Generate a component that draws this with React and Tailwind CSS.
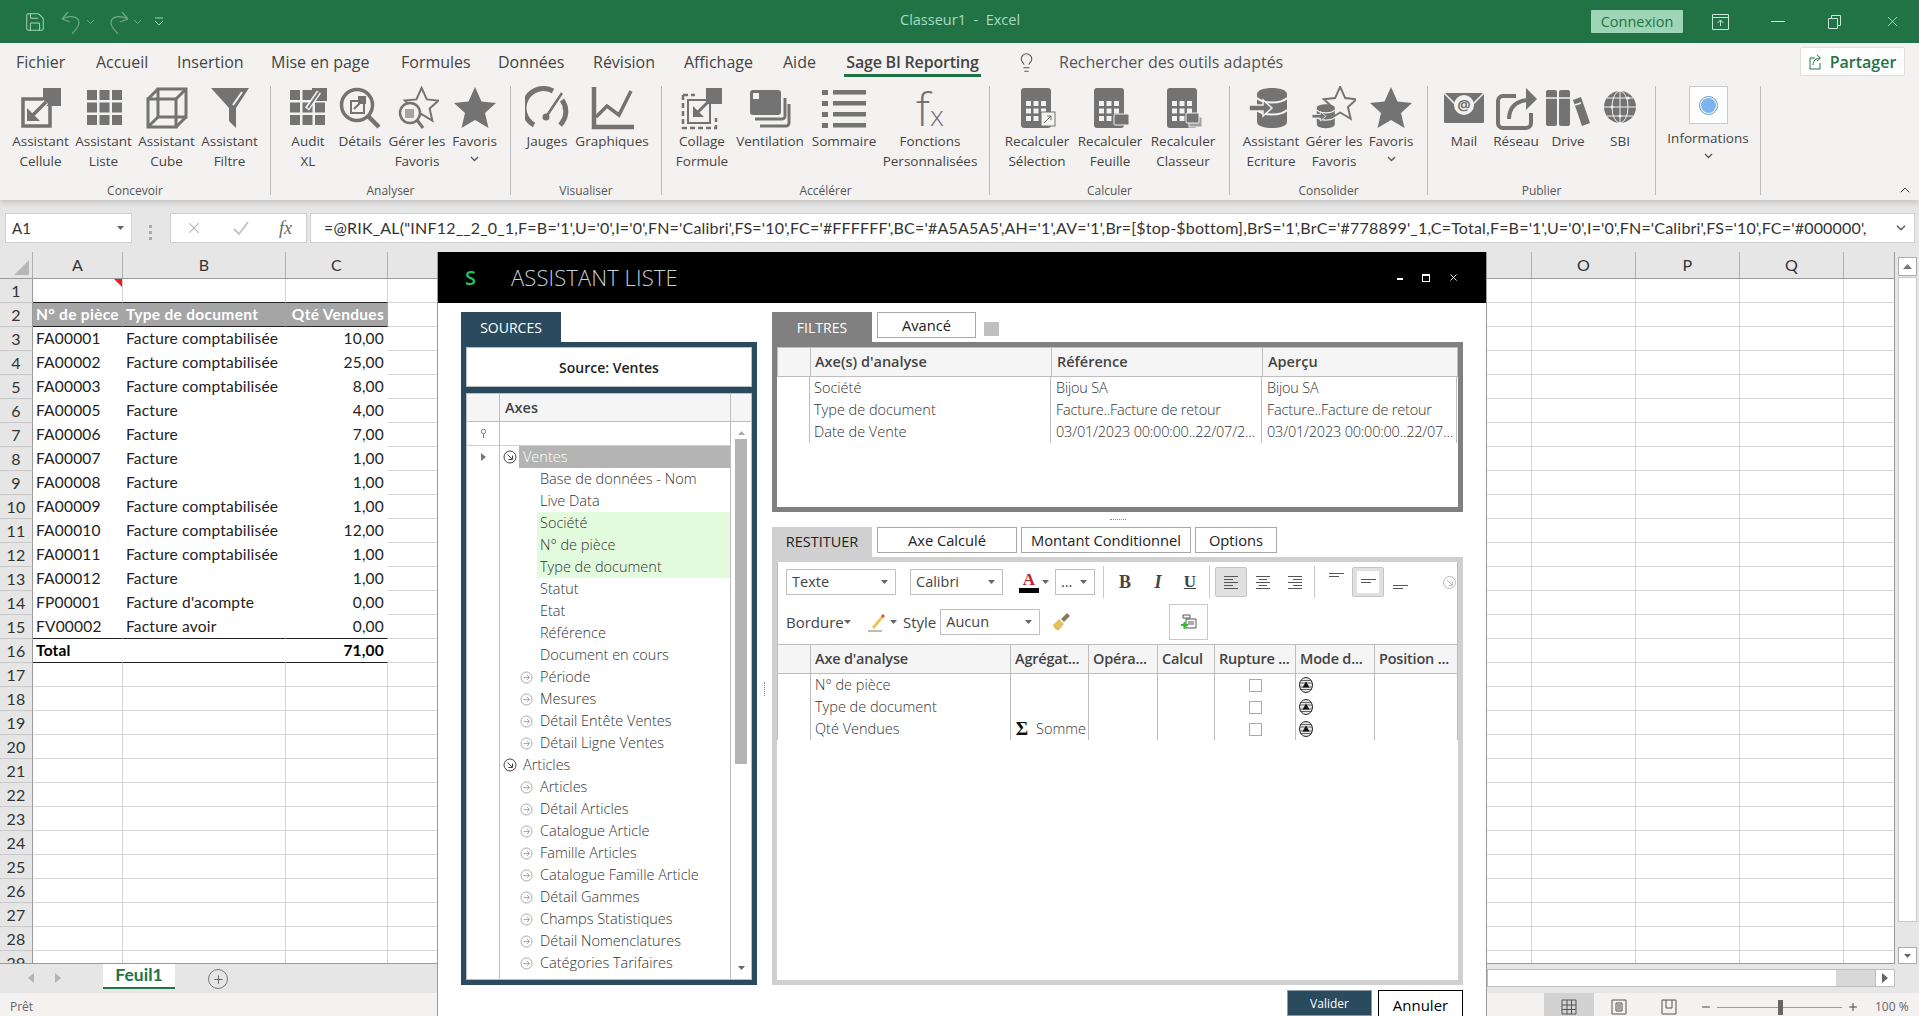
import { Save, Minus, X, Plus, Lightbulb, ChevronUp, ChevronDown } from "lucide-react"

const G = "#737373"

const Caret = ({ className = "" }) => (
    <svg width="7" height="4" viewBox="0 0 7 4" className={className}><path d="M0 0h7L3.5 4z" fill="#666" /></svg>
)
const Chevron = () => (
    <svg width="9" height="6" viewBox="0 0 9 6"><path d="M1 1l3.5 3.5L8 1" fill="none" stroke="#555" strokeWidth="1.3" /></svg>
)
const Ico = ({ children }) => <svg width="44" height="44" viewBox="0 0 44 44">{children}</svg>

const STAR = "22,1 28.5,15.5 43,17 32,27 35.5,42 22,34 8.5,42 12,27 1,17 15.5,15.5"

const grid3 = (x, y, s, gap, fill = G) => {
    const out = []
    for (let i = 0; i < 3; i++) {
        for (let j = 0; j < 3; j++) {
            out.push(<rect key={i + "-" + j} x={x + j * (s + gap)} y={y + i * (s + gap)} width={s} height={s} fill={fill} />)
        }
    }
    return out
}

const Calc = ({ badge }) => (
    <Ico>
        <rect x="6" y="2" width="30" height="40" rx="3" fill={G} />
        {grid3(11, 15, 5, 2.5, "#f3f2f1")}
        {badge === 1 && <g><rect x="26" y="26" width="14" height="14" fill="#f3f2f1" stroke={G} /><path d="M29 37l7-7M32 30h4v4" stroke={G} fill="none" /></g>}
        {badge === 2 && <rect x="26" y="28" width="15" height="11" rx="1" fill={G} stroke="#f3f2f1" />}
        {badge === 3 && <g><rect x="28" y="31" width="13" height="10" fill="#a0a0a0" stroke="#f3f2f1" /><rect x="25" y="27" width="13" height="10" rx="1" fill={G} stroke="#f3f2f1" /></g>}
    </Ico>
)

const DbIcon = ({ dx = 0 }) => (
    <g transform={`translate(${dx} 0)`}>
        <path d="M8 8c0-8 30-8 30 0v28c0 8-30 8-30 0z" fill={G} />
        <path d="M8 12c6 6 24 6 30 0M8 24c6 6 24 6 30 0" stroke="#f3f2f1" strokeWidth="2" fill="none" />
        <path d="M0 19h14v-5l9 8-9 8v-5H0z" fill={G} stroke="#f3f2f1" strokeWidth="1.5" />
    </g>
)

const icons = {
    cellule: (
        <Ico>
            <rect x="4" y="13" width="27" height="27" fill="none" stroke={G} strokeWidth="3.5" />
            <rect x="24" y="2" width="18" height="18" fill={G} />
            <path d="M27 16L14 30" stroke="#f3f2f1" strokeWidth="6" />
            <path d="M27 16L14 29" stroke={G} strokeWidth="3.5" />
            <path d="M8 35V22l13 13z" fill={G} />
        </Ico>
    ),
    liste: <Ico>{grid3(5, 4, 10, 2.5)}</Ico>,
    cube: (
        <Ico>
            <rect x="3" y="13" width="28" height="28" fill="none" stroke={G} strokeWidth="3" />
            <rect x="13" y="3" width="28" height="28" fill="none" stroke={G} strokeWidth="3" />
            <path d="M3 13L13 3M31 13L41 3M3 41l10-10M31 41l10-10" stroke={G} strokeWidth="3" />
        </Ico>
    ),
    filtre: (
        <Ico>
            <path d="M3 2h38L28 22v20l-7-7V22z" fill={G} />
            <path d="M34 6L25 19" stroke="#f3f2f1" strokeWidth="2" />
        </Ico>
    ),
    audit: (
        <Ico>
            {grid3(4, 4, 10, 2.5)}
            <rect x="26" y="2" width="15" height="13" fill={G} />
            <path d="M33 6L21 23" stroke="#f3f2f1" strokeWidth="5" />
            <path d="M33 6L22 22" stroke={G} strokeWidth="2" />
        </Ico>
    ),
    details: (
        <Ico>
            <circle cx="19" cy="19" r="15.5" fill="none" stroke={G} strokeWidth="3.5" />
            <path d="M30 30l11 11" stroke={G} strokeWidth="4.5" />
            <rect x="13" y="15" width="13" height="12" fill="none" stroke={G} strokeWidth="2" />
            <rect x="20" y="10" width="8" height="8" fill={G} />
            <path d="M22 17l-6 6" stroke={G} strokeWidth="2" />
        </Ico>
    ),
    gerer: (
        <Ico>
            <polygon points={STAR} transform="translate(9 1) scale(.8)" fill="none" stroke={G} strokeWidth="2.5" />
            <circle cx="15" cy="27" r="10" fill="#f3f2f1" stroke={G} strokeWidth="2.5" />
            <rect x="10" y="23" width="9" height="9" fill="#a5a5a5" />
            <path d="M22 34l6 8" stroke={G} strokeWidth="3" />
        </Ico>
    ),
    favoris: <Ico><polygon points={STAR} fill={G} /></Ico>,
    jauges: (
        <Ico>
            <path d="M9 39A19 19 0 0 1 28 5M37 14A19 19 0 0 1 35 39" fill="none" stroke={G} strokeWidth="5" />
            <path d="M21 31L37 7" stroke={G} strokeWidth="2.5" />
            <circle cx="21" cy="31" r="3.5" fill={G} />
        </Ico>
    ),
    graphiques: (
        <Ico>
            <path d="M4 1v40h40" fill="none" stroke={G} strokeWidth="4.5" />
            <path d="M6 31l11-11 12 9L41 5" fill="none" stroke={G} strokeWidth="3.5" />
        </Ico>
    ),
    collage: (
        <Ico>
            <path d="M3 9v33h33V32" fill="none" stroke={G} strokeWidth="2.5" strokeDasharray="5 3" />
            <path d="M3 9h12" stroke={G} strokeWidth="2.5" strokeDasharray="5 3" />
            <rect x="8" y="14" width="22" height="23" fill="none" stroke={G} strokeWidth="2" />
            <rect x="26" y="2" width="16" height="16" fill={G} />
            <path d="M29 15L18 26" stroke={G} strokeWidth="3" />
            <path d="M13 31V20l11 11z" fill={G} />
        </Ico>
    ),
    ventilation: (
        <Ico>
            <rect x="2" y="4" width="31" height="25" rx="3" fill={G} />
            <rect x="5" y="7" width="6" height="6" fill="#f3f2f1" />
            <path d="M7 33h27a3 3 0 0 0 3-3V12" fill="none" stroke={G} strokeWidth="3" />
            <path d="M12 40h26a3 3 0 0 0 3-3V18" fill="none" stroke={G} strokeWidth="3" />
        </Ico>
    ),
    sommaire: (
        <Ico>
            {[4, 15, 26, 37].map((y) => (
                <g key={y}>
                    <rect x="0" y={y} width="6" height="5" fill={G} />
                    <rect x="11" y={y} width="33" height="4.5" fill={G} />
                </g>
            ))}
        </Ico>
    ),
    fx: (
        <svg width="44" height="44" viewBox="0 0 44 44">
            <text x="8" y="40" fontSize="46" fontWeight="300" fontFamily="Open Sans" fill={G}>f</text>
            <text x="22" y="40" fontSize="28" fontWeight="300" fontFamily="Open Sans" fill={G}>x</text>
        </svg>
    ),
    calc1: <Calc badge={1} />,
    calc2: <Calc badge={2} />,
    calc3: <Calc badge={3} />,
    db: <Ico><DbIcon /></Ico>,
    gererDb: (
        <Ico>
            <polygon points={STAR} transform="translate(11 0) scale(.78)" fill="none" stroke={G} strokeWidth="2.5" />
            <g transform="translate(0 17) scale(.6)"><DbIcon /></g>
        </Ico>
    ),
    mail: (
        <Ico>
            <path d="M2 7h40v29a1 1 0 0 1-1 1H3a1 1 0 0 1-1-1z" fill={G} />
            <path d="M2 7l20 20L42 7" fill="none" stroke="#f3f2f1" strokeWidth="1.5" />
            <circle cx="22" cy="19" r="10" fill="#f3f2f1" />
            <text x="22" y="24" textAnchor="middle" fontSize="15" fontWeight="700" fontFamily="Open Sans" fill={G}>@</text>
        </Ico>
    ),
    reseau: (
        <Ico>
            <path d="M22 10H9a5 5 0 0 0-5 5v22a5 5 0 0 0 5 5h23a5 5 0 0 0 5-5V27" fill="none" stroke={G} strokeWidth="4" />
            <path d="M15 33c0-12 8-19 20-19" fill="none" stroke={G} strokeWidth="4" />
            <path d="M32 2l11 11-11 11z" fill={G} />
        </Ico>
    ),
    drive: (
        <Ico>
            <rect x="0" y="4" width="11" height="36" rx="2" fill={G} />
            <rect x="13" y="4" width="11" height="36" rx="2" fill={G} />
            <path d="M0 12h11M13 12h11" stroke="#f3f2f1" strokeWidth="1.5" />
            <path d="M27 14l8-3 9 26-8 3z" fill={G} />
            <path d="M29 19l6-2" stroke="#f3f2f1" strokeWidth="1.5" />
        </Ico>
    ),
    sbi: (
        <Ico>
            <circle cx="22" cy="21" r="16" fill={G} />
            <ellipse cx="22" cy="21" rx="8" ry="16" fill="none" stroke="#f3f2f1" />
            <path d="M6 21h32M9 12h26M9 30h26" stroke="#f3f2f1" />
            <path d="M22 5v32" stroke="#f3f2f1" />
            <circle cx="14" cy="21" r="1.5" fill="#f3f2f1" />
            <circle cx="30" cy="12" r="1.5" fill="#f3f2f1" />
            <circle cx="22" cy="30" r="1.5" fill="#f3f2f1" />
        </Ico>
    ),
}

const groups = [
    { label: "Concevoir", w: "w-[271px]", pl: "pl-[9px]", items: [
        { icon: "cellule", l: ["Assistant", "Cellule"], w: "w-[63px]" },
        { icon: "liste", l: ["Assistant", "Liste"], w: "w-[63px]" },
        { icon: "cube", l: ["Assistant", "Cube"], w: "w-[63px]" },
        { icon: "filtre", l: ["Assistant", "Filtre"], w: "w-[63px]" },
    ] },
    { label: "Analyser", w: "w-[240px]", pl: "pl-[12px]", items: [
        { icon: "audit", l: ["Audit", "XL"], w: "w-[50px]" },
        { icon: "details", l: ["Détails"], w: "w-[54px]" },
        { icon: "gerer", l: ["Gérer les", "Favoris"], w: "w-[60px]" },
        { icon: "favoris", l: ["Favoris"], w: "w-[55px]", chev: true },
    ] },
    { label: "Visualiser", w: "w-[151px]", pl: "pl-[11px]", items: [
        { icon: "jauges", l: ["Jauges"], w: "w-[50px]" },
        { icon: "graphiques", l: ["Graphiques"], w: "w-[80px]" },
    ] },
    { label: "Accélérer", w: "w-[328px]", pl: "pl-[10px]", items: [
        { icon: "collage", l: ["Collage", "Formule"], w: "w-[60px]" },
        { icon: "ventilation", l: ["Ventilation"], w: "w-[76px]" },
        { icon: "sommaire", l: ["Sommaire"], w: "w-[72px]" },
        { icon: "fx", l: ["Fonctions", "Personnalisées"], w: "w-[100px]" },
    ] },
    { label: "Calculer", w: "w-[240px]", pl: "pl-[11px]", items: [
        { icon: "calc1", l: ["Recalculer", "Sélection"], w: "w-[72px]" },
        { icon: "calc2", l: ["Recalculer", "Feuille"], w: "w-[74px]" },
        { icon: "calc3", l: ["Recalculer", "Classeur"], w: "w-[72px]" },
    ] },
    { label: "Consolider", w: "w-[198px]", pl: "pl-[8px]", items: [
        { icon: "db", l: ["Assistant", "Ecriture"], w: "w-[66px]" },
        { icon: "gererDb", l: ["Gérer les", "Favoris"], w: "w-[60px]" },
        { icon: "favoris", l: ["Favoris"], w: "w-[54px]", chev: true },
    ] },
    { label: "Publier", w: "w-[228px]", pl: "pl-[12px]", items: [
        { icon: "mail", l: ["Mail"], w: "w-[48px]" },
        { icon: "reseau", l: ["Réseau"], w: "w-[56px]" },
        { icon: "drive", l: ["Drive"], w: "w-[48px]" },
        { icon: "sbi", l: ["SBI"], w: "w-[56px]" },
    ] },
]

const tabs = [
    { t: "Fichier", w: "w-[80px]" },
    { t: "Accueil", w: "w-[81px]" },
    { t: "Insertion", w: "w-[94px]" },
    { t: "Mise en page", w: "w-[130px]" },
    { t: "Formules", w: "w-[97px]" },
    { t: "Données", w: "w-[95px]" },
    { t: "Révision", w: "w-[91px]" },
    { t: "Affichage", w: "w-[99px]" },
    { t: "Aide", w: "w-[61px]" },
]

const Ribbon = () => (
    <div className="relative z-10 h-[157px] shrink-0 bg-[#f3f2f1] shadow-[0_3px_5px_rgba(0,0,0,0.14)]">
        <div className="flex h-[43px] items-start pl-[16px] pt-[7px] text-[16px] text-[#444]">
            {tabs.map((t) => (
                <div key={t.t} className={`${t.w} whitespace-nowrap`}>{t.t}</div>
            ))}
            <div className="w-[137px] border-b-[3px] border-[#217346] text-center font-semibold whitespace-nowrap tracking-[-0.2px]">Sage BI Reporting</div>
            <Lightbulb size={21} strokeWidth={1.2} className="ml-[35px] mt-[2px] text-[#555]" />
            <div className="ml-[22px] text-[#555]">Rechercher des outils adaptés</div>
            <div className="ml-auto mr-[14px] flex h-[29px] w-[105px] -mt-[3px] items-center justify-center gap-[6px] rounded-[2px] border border-[#e1dfdd] bg-white font-semibold text-[#217346]">
                <svg width="15" height="16" viewBox="0 0 15 16"><path d="M6 4H1v11h10V9M4 11c0-4 3-7 7-7M8 1l3.500 3L8 7" fill="none" stroke="#217346" /></svg>
                Partager
            </div>
        </div>
        <div className="flex h-[109px]">
            {groups.map((g) => (
                <div key={g.label} className={`${g.w} ${g.pl} relative flex border-r border-[#bdbdbd]`}>
                    {g.items.map((b, i) => (
                        <div key={i} className={`${b.w} flex flex-col items-center text-[13.5px] leading-[20px] text-[#444]`}>
                            <div className="mb-[1px] h-[44px]">{icons[b.icon]}</div>
                            {b.l.map((x) => <div key={x} className="whitespace-nowrap">{x}</div>)}
                            {b.chev && <div className="mt-[5px]"><Chevron /></div>}
                        </div>
                    ))}
                    <div className="absolute bottom-[-4px] left-0 right-0 text-center text-[12px] leading-[16px] text-[#555]">{g.label}</div>
                </div>
            ))}
            <div className="flex w-[105px] flex-col items-center border-r border-[#bdbdbd] text-[13.5px] text-[#444]">
                <div className="flex h-[38px] w-[39px] items-center justify-center border border-[#c8c8c8] bg-white">
                    <div className="h-[15px] w-[15px] rounded-full bg-[#7cb4ee] outline outline-1 outline-offset-1 outline-[#5c9ad6]" />
                </div>
                <div className="mt-[4px] leading-[20px]">Informations</div>
                <div className="mt-[5px]"><Chevron /></div>
            </div>
            <ChevronUp size={16} strokeWidth={1.5} className="ml-auto mr-[6px] mt-[96px] text-[#444]" />
        </div>
    </div>
)

const FORMULA = "=@RIK_AL(\"INF12__2_0_1,F=B='1',U='0',I='0',FN='Calibri',FS='10',FC='#FFFFFF',BC='#A5A5A5',AH='1',AV='1',Br=[$top-$bottom],BrS='1',BrC='#778899'_1,C=Total,F=B='1',U='0',I='0',FN='Calibri',FS='10',FC='#000000',"

const FormulaBar = () => (
    <div className="flex h-[52px] shrink-0 bg-[#e6e6e6] pl-[5px] pr-[4px] pt-[13px] font-['Lato'] text-[15px] text-[#333]">
        <div className="flex h-[30px] w-[127px] items-center justify-between border border-[#d0d0d0] bg-white pl-[6px] pr-[7px]">
            A1<Caret />
        </div>
        <div className="ml-[17px] flex w-[4px] flex-col justify-center gap-[3px]">
            {[0, 1, 2].map((i) => <div key={i} className="h-[3px] w-[3px] bg-[#aaa]" />)}
        </div>
        <div className="ml-[17px] flex h-[30px] w-[137px] items-center justify-between border border-[#d0d0d0] bg-white px-[14px]">
            <X size={18} strokeWidth={1.4} className="text-[#aaa]" />
            <svg width="18" height="16" viewBox="0 0 18 16"><path d="M2 9l5 5L16 2" fill="none" stroke="#c4c4c4" strokeWidth="2" /></svg>
            <span className="font-['Liberation_Serif'] text-[18px] italic text-[#666]">fx</span>
        </div>
        <div className="ml-[3px] flex h-[30px] flex-1 items-center justify-between border border-[#d0d0d0] bg-white pl-[13px] pr-[6px]">
            <span className="whitespace-nowrap text-[16px] tracking-[0.2px]">{FORMULA}</span>
            <ChevronDown size={14} strokeWidth={3} className="text-[#666]" />
        </div>
    </div>
)

// width, label for each sheet column; D to N sit behind the dialog
const COLS = [
    ["w-[90px]", "A"], ["w-[163px]", "B"], ["w-[102px]", "C"],
    ["w-[104px]", ""], ["w-[104px]", ""], ["w-[104px]", ""], ["w-[104px]", ""], ["w-[104px]", ""],
    ["w-[104px]", ""], ["w-[104px]", ""], ["w-[104px]", ""], ["w-[104px]", ""], ["w-[104px]", ""],
    ["w-[104px]", ""], ["w-[104px]", "O"], ["w-[104px]", "P"], ["w-[104px]", "Q"], ["w-[51px]", ""],
]

const DATA = {
    2: ["N° de pièce", "Type de document", "Qté Vendues"],
    3: ["FA00001", "Facture comptabilisée", "10,00"],
    4: ["FA00002", "Facture comptabilisée", "25,00"],
    5: ["FA00003", "Facture comptabilisée", "8,00"],
    6: ["FA00005", "Facture", "4,00"],
    7: ["FA00006", "Facture", "7,00"],
    8: ["FA00007", "Facture", "1,00"],
    9: ["FA00008", "Facture", "1,00"],
    10: ["FA00009", "Facture comptabilisée", "1,00"],
    11: ["FA00010", "Facture comptabilisée", "12,00"],
    12: ["FA00011", "Facture comptabilisée", "1,00"],
    13: ["FA00012", "Facture", "1,00"],
    14: ["FP00001", "Facture d'acompte", "0,00"],
    15: ["FV00002", "Facture avoir", "0,00"],
    16: ["Total", "", "71,00"],
}

const Cell = ({ r, c, w }) => {
    const inTable = c < 3 && r >= 2 && r <= 16
    const blackBottom = c < 3 && (r === 1 || r === 2 || r === 15 || r === 16)
    const bottom = blackBottom ? "border-b-[#222]" : inTable ? "border-b-white" : "border-b-[#d4d4d4]"
    const right = inTable ? "border-r-transparent" : "border-r-[#d4d4d4]"
    const text = DATA[r] ? DATA[r][c] : ""
    const style = r === 2 && c < 3 ? "bg-[#a5a5a5] font-bold text-white tracking-[0.3px]" : r === 16 && c < 3 ? "font-bold text-black" : "text-[#222]"
    return (
        <div className={`${w} ${bottom} ${right} ${style} ${c === 2 ? "justify-end pr-[3px]" : "pl-[3px]"} relative flex h-full shrink-0 items-center overflow-hidden border-r border-b whitespace-nowrap`}>
            {c < 3 ? text : ""}
            {r === 1 && c === 0 && (
                <div className="absolute right-0 top-0 h-0 w-0 border-l-[8px] border-t-[8px] border-l-transparent border-t-[#e8202a]" />
            )}
        </div>
    )
}

const ROWS = Array.from({ length: 29 }, (_, i) => i + 1)

const Sheet = () => (
    <div className="flex h-[712px] shrink-0 bg-[#e6e6e6] font-['Lato'] text-[15.500px] tracking-[0.2px]">
        <div className="w-[1895px] overflow-hidden border-r border-b border-[#9a9a9a]">
            <div className="flex h-[27px] border-b border-[#9a9a9a] text-[16px] text-[#333]">
                <div className="relative w-[33px] shrink-0 border-r border-[#b0b0b0]">
                    <div className="absolute bottom-[3px] right-[3px] h-0 w-0 border-b-[15px] border-l-[15px] border-b-[#b8b8b8] border-l-transparent" />
                </div>
                {COLS.map(([w, label], i) => (
                    <div key={i} className={`${w} flex shrink-0 items-center justify-center border-r border-[#b0b0b0]`}>{label}</div>
                ))}
            </div>
            {ROWS.map((r) => (
                <div key={r} className="flex h-[24px] bg-white">
                    <div className="flex w-[33px] shrink-0 items-center justify-center border-r border-b border-r-[#9a9a9a] border-b-[#c8c8c8] bg-[#e6e6e6] text-[16px] text-[#333]">{r}</div>
                    {COLS.map(([w], c) => <Cell key={c} r={r} c={c} w={w} />)}
                </div>
            ))}
        </div>
        <div className="ml-[3px] flex w-[19px] flex-col pt-[5px]">
            <div className="flex h-[19px] items-center justify-center border border-[#ababab] bg-white"><TriUp /></div>
            <div className="mt-[1px] h-[645px] border border-[#c8c8c8] bg-white" />
            <div className="mt-[25px] flex h-[17px] items-center justify-center border border-[#ababab] bg-white"><Caret /></div>
        </div>
    </div>
)

const TriUp = () => <svg width="9" height="5" viewBox="0 0 9 5"><path d="M0 5h9L4.500 0z" fill="#777" /></svg>
const TriSide = ({ flip }) => (
    <svg width="6" height="10" viewBox="0 0 6 10"><path d={flip ? "M6 0v10L0 5z" : "M0 0v10l6-5z"} fill="#b4b4b4" /></svg>
)

const BottomBars = () => (
    <>
        <div className="flex h-[29px] shrink-0 items-start bg-[#e6e6e6] font-['Lato']">
            <div className="ml-[28px] mt-[9px] flex gap-[21px]"><TriSide flip /><TriSide /></div>
            <div className="ml-[42px] flex h-[25px] w-[72px] items-center justify-center border-b-[2px] border-[#217346] bg-white text-[17.500px] font-bold text-[#217346]">Feuil1</div>
            <div className="ml-[33px] mt-[5px] flex h-[20px] w-[20px] items-center justify-center rounded-full border border-[#777]">
                <Plus size={13} className="text-[#666]" />
            </div>
            <div className="ml-auto mr-[24px] mt-[5px] flex h-[18px] w-[408px] border border-[#bdbdbd] bg-[#d8d8d8]">
                <div className="w-[348px] bg-white" />
                <div className="ml-auto flex w-[19px] items-center justify-center border-l border-[#bdbdbd] bg-white"><svg width="6" height="10" viewBox="0 0 6 10"><path d="M0 0v10l6-5z" fill="#666" /></svg></div>
            </div>
        </div>
        <div className="flex h-[23px] shrink-0 bg-[#f3f2f1] pl-[10px] text-[12px] text-[#666]">
            <span className="pt-[6px] leading-[16px]">Prêt</span>
            <div className="ml-auto flex h-full">
                <div className="flex h-full w-[50px] items-center justify-center bg-[#d2d2d2] pt-[5px]">
                    <svg width="16" height="16" viewBox="0 0 16 16"><path d="M1 1h14v14H1zM1 6h14M1 10.500h14M6 1v14M10.500 1v14" fill="none" stroke="#555" /></svg>
                </div>
                <div className="flex h-full items-center pt-[5px]">
                    <div className="flex w-[50px] justify-center">
                        <svg width="16" height="16" viewBox="0 0 16 16"><path d="M1 1h14v14H1zM5 4h6v8H5zM6 6h4M6 8h4M6 10h4" fill="none" stroke="#555" /></svg>
                    </div>
                    <div className="flex w-[50px] justify-center">
                        <svg width="16" height="16" viewBox="0 0 16 16"><path d="M1 1h14v14H1zM5 1v8h6V1" fill="none" stroke="#555" /></svg>
                    </div>
                    <Minus size={12} className="ml-[6px] text-[#444]" />
                    <div className="relative ml-[5px] h-[1px] w-[125px] bg-[#999]">
                        <div className="absolute left-[61px] top-[-7px] h-[15px] w-[5px] bg-[#666]" />
                    </div>
                    <Plus size={12} className="ml-[5px] text-[#444]" />
                    <div className="ml-[16px] mr-[9px] w-[35px] text-[12px] text-[#666]">100 %</div>
                </div>
            </div>
        </div>
    </>
)

const TitleBar = () => (
    <div className="flex h-[43px] shrink-0 items-center bg-[#217346] text-[#a4d4ba]">
        <Save size={22} strokeWidth={1.1} className="ml-[24px] text-[#a4d4ba]" />
        <svg width="22" height="26" viewBox="0 0 22 26" className="ml-[14px]"><path d="M2 10l6-7M2 10l8 3M2 10c8-4 17-3 17 4 0 4-4 7-7 11" fill="none" stroke="#6ea98a" strokeWidth="1.200" /></svg>
        <svg width="7" height="4" viewBox="0 0 7 4" className="ml-[5px]"><path d="M0 0l3.500 3.500L7 0" fill="none" stroke="#6ea98a" /></svg>
        <svg width="22" height="26" viewBox="0 0 22 26" className="ml-[14px]"><path d="M20 10l-6-7M20 10l-8 3M20 10c-8-4-17-3-17 4 0 4 4 7 7 11" fill="none" stroke="#6ea98a" strokeWidth="1.200" /></svg>
        <svg width="7" height="4" viewBox="0 0 7 4" className="ml-[4px]"><path d="M0 0l3.500 3.500L7 0" fill="none" stroke="#6ea98a" /></svg>
        <svg width="10" height="10" viewBox="0 0 10 10" className="ml-[13px]"><path d="M1 1h8M1 4l4 4 4-4" fill="none" stroke="#a4d4ba" /></svg>
        <div className="ml-[736px] -mt-[3px] w-[140px] text-[14.500px] text-[#a8dcc0] whitespace-pre">Classeur1  -  Excel</div>
        <div className="ml-[551px] flex h-[23px] w-[92px] items-center justify-center rounded-[1px] bg-[#9fd5b7] text-[14.500px] text-[#217346]">Connexion</div>
        <svg width="17" height="16" viewBox="0 0 17 16" className="ml-[29px]"><path d="M.5.500h16v15H.5zM.5 3.500h16M8.500 12V6M5.500 9l3-3 3 3" fill="none" stroke="#c8e4d5" /></svg>
        <div className="ml-[42px] h-[1px] w-[14px] bg-[#c8e4d5]" />
        <svg width="13" height="14" viewBox="0 0 13 14" className="ml-[43px]"><path d="M.5 3.500h9v10h-9zM3.500 3.500V.5h9v10h-3" fill="none" stroke="#c8e4d5" /></svg>
        <X size={17} strokeWidth={1} className="ml-[43px] text-[#e0f0e7]" />
    </div>
)

const TREE = [
    { t: "Base de données - Nom" }, { t: "Live Data" },
    { t: "Société", green: true }, { t: "N° de pièce", green: true }, { t: "Type de document", green: true },
    { t: "Statut" }, { t: "Etat" }, { t: "Référence" }, { t: "Document en cours" },
    { t: "Période", ico: true }, { t: "Mesures", ico: true }, { t: "Détail Entête Ventes", ico: true }, { t: "Détail Ligne Ventes", ico: true },
    { t: "Articles", top: true },
    { t: "Articles", ico: true }, { t: "Détail Articles", ico: true }, { t: "Catalogue Article", ico: true },
    { t: "Famille Articles", ico: true }, { t: "Catalogue Famille Article", ico: true }, { t: "Détail Gammes", ico: true },
    { t: "Champs Statistiques", ico: true }, { t: "Détail Nomenclatures", ico: true }, { t: "Catégories Tarifaires", ico: true },
]

const TopArrow = () => (
    <svg width="14" height="14" viewBox="0 0 14 14"><circle cx="7" cy="7" r="6" fill="none" stroke="#444" /><path d="M4.500 4.500l4.500 4.500M9.500 5.500v4h-4" fill="none" stroke="#444" /></svg>
)
const SubArrow = () => (
    <svg width="13" height="13" viewBox="0 0 13 13"><circle cx="6.500" cy="6.500" r="5.500" fill="none" stroke="#aaa" /><path d="M3.500 6.500h6M7 4l2.500 2.500L7 9" fill="none" stroke="#aaa" /></svg>
)

const TreeRow = ({ item }) => {
    if (item.top) {
        return (
            <div className="flex h-[22px] items-center pl-[3px] text-[#333]">
                <TopArrow /><span className="ml-[6px]">{item.t}</span>
            </div>
        )
    }
    return (
        <div className={`ml-[37px] flex h-[22px] items-center pl-[3px] whitespace-nowrap text-[#333] ${item.green ? "bg-[#e2fbdd]" : ""}`}>
            {item.ico && <div className="-ml-[20px] mr-[7px]"><SubArrow /></div>}
            <span>{item.t}</span>
        </div>
    )
}

const SourcesPanel = () => (
    <div className="flex w-[296px] shrink-0 flex-col">
        <div className="flex h-[30px] w-[100px] items-center justify-center bg-[#2a4a5e] text-[14px] text-white">SOURCES</div>
        <div className="flex h-[643px] flex-col border-[5px] border-[#2a4a5e] bg-[#2a4a5e]">
            <div className="flex h-[40px] shrink-0 items-center justify-center border border-[#bdbdbd] bg-white text-[14px] font-semibold text-[#222]">Source: Ventes</div>
            <div className="mt-[6px] flex flex-1 flex-col border border-[#bdbdbd] bg-white text-[14.500px] font-light">
                <div className="flex h-[28px] shrink-0 border-b border-[#bdbdbd] bg-[#f5f5f5] font-semibold text-[#444]">
                    <div className="w-[33px] border-r border-[#bdbdbd]" />
                    <div className="flex w-[231px] items-center border-r border-[#bdbdbd] pl-[5px]">Axes</div>
                </div>
                <div className="relative flex flex-1">
                    <div className="w-[33px] shrink-0 border-r border-[#bdbdbd]">
                        <div className="flex h-[24px] items-center justify-center border-b border-[#d0d0d0]">
                            <svg width="7" height="9" viewBox="0 0 7 9"><circle cx="3.500" cy="2.500" r="2.200" fill="none" stroke="#777" /><path d="M3.500 5v4" stroke="#777" /></svg>
                        </div>
                        <div className="flex h-[22px] items-center justify-center">
                            <svg width="5" height="8" viewBox="0 0 5 8"><path d="M0 0v8l5-4z" fill="#777" /></svg>
                        </div>
                    </div>
                    <div className="w-[231px] shrink-0 border-r border-[#bdbdbd]">
                        <div className="h-[24px] border-b border-[#d0d0d0]" />
                        <div className="flex h-[22px] items-center pl-[3px]">
                            <TopArrow />
                            <div className="ml-[2px] flex h-full flex-1 items-center bg-[#b4b4b4] pl-[4px] text-white">Ventes</div>
                        </div>
                        {TREE.map((item, i) => <TreeRow key={i} item={item} />)}
                    </div>
                    <div className="flex flex-1 flex-col items-center pt-[9px]">
                        <TriUpSmall />
                        <div className="mt-[4px] h-[325px] w-[12px] bg-[#b4b4b4]" />
                        <div className="mt-auto mb-[9px]"><Caret /></div>
                    </div>
                </div>
            </div>
        </div>
    </div>
)

const TriUpSmall = () => <svg width="7" height="4" viewBox="0 0 7 4"><path d="M0 4h7L3.500 0z" fill="#aaa" /></svg>

const TabBtn = ({ w, children }) => (
    <div className={`${w} flex h-[26px] items-center justify-center border border-[#a8a8a8] bg-white text-[14.700px] font-medium text-[#222] whitespace-nowrap`}>{children}</div>
)

const FILTERS = [
    ["Société", "Bijou SA", "Bijou SA"],
    ["Type de document", "Facture..Facture de retour", "Facture..Facture de retour"],
    ["Date de Vente", "03/01/2023 00:00:00..22/07/2...", "03/01/2023 00:00:00..22/07..."],
]

const FiltresPanel = () => (
    <>
        <div className="flex h-[30px] items-start">
            <div className="flex h-[30px] w-[100px] items-center justify-center bg-[#808080] text-[14px] text-white">FILTRES</div>
            <div className="ml-[5px]"><TabBtn w="w-[99px]">Avancé</TabBtn></div>
            <div className="ml-[8px] mt-[10px] h-[14px] w-[15px] bg-[#c0c0c0]" />
        </div>
        <div className="h-[170px] border-[5px] border-[#808080] bg-white text-[14.500px] font-light text-[#333]">
            <div className="flex h-[30px] border border-[#bdbdbd] bg-[#f5f5f5] font-semibold text-[#444]">
                <div className="w-[33px] border-r border-[#bdbdbd]" />
                <div className="flex w-[241px] items-center border-r border-[#bdbdbd] pl-[4px]">Axe(s) d'analyse</div>
                <div className="flex w-[211px] items-center border-r border-[#bdbdbd] pl-[5px]">Référence</div>
                <div className="flex flex-1 items-center pl-[5px]">Aperçu</div>
            </div>
            {FILTERS.map((row) => (
                <div key={row[0]} className="flex h-[22px] items-center whitespace-nowrap">
                    <div className="h-full w-[33px] border-r border-[#bdbdbd]" />
                    <div className="flex h-full w-[241px] items-center border-r border-[#bdbdbd] pl-[4px]">{row[0]}</div>
                    <div className="flex h-full w-[211px] items-center overflow-hidden border-r border-[#bdbdbd] pl-[5px] tracking-[-0.2px]">{row[1]}</div>
                    <div className="flex h-full w-[195px] items-center overflow-hidden border-r border-[#bdbdbd] pl-[5px] tracking-[-0.2px]">{row[2]}</div>
                </div>
            ))}
        </div>
    </>
)

const Sel = ({ w, children }) => (
    <div className={`${w} flex h-[26px] shrink-0 items-center justify-between border border-[#c0c0c0] bg-white pl-[5px] pr-[7px] text-[14.500px] text-[#444]`}>
        <span>{children}</span><Caret />
    </div>
)
const VSep = () => <div className="h-[32px] w-[1px] bg-[#c8c8c8]" />

const AlignIco = ({ mode }) => {
    const d = {
        left: "M0 .5h14M0 3.5h9M0 6.500h14M0 9.500h9M0 12.500h14",
        center: "M0 .5h14M3 3.500h8M0 6.500h14M3 9.500h8M0 12.500h14",
        right: "M0 .5h14M5 3.500h9M0 6.500h14M5 9.500h9M0 12.500h14",
    }[mode]
    return <svg width="14" height="13" viewBox="0 0 14 13"><path d={d} stroke="#555" /></svg>
}
const VAlignIco = () => <svg width="15" height="6" viewBox="0 0 15 6"><path d="M0 .5h15M0 3.500h10" stroke="#555" /></svg>

const TBtn = ({ active, children }) => (
    <div className={`flex h-[30px] w-[32px] shrink-0 items-center justify-center rounded-[2px] ${active ? "border border-[#c4c4c4] bg-[#e0e0e0]" : ""}`}>{children}</div>
)

const Toolbar = () => (
    <>
        <div className="flex h-[30px] items-center pl-[8px]">
            <Sel w="w-[110px]">Texte</Sel>
            <div className="ml-[14px]"><Sel w="w-[93px]">Calibri</Sel></div>
            <div className="ml-[16px] flex flex-col items-center">
                <span className="font-['Liberation_Serif'] text-[17px] leading-[17px] font-bold text-[#c8202a]">A</span>
                <div className="h-[5px] w-[20px] bg-black" />
            </div>
            <Caret className="ml-[3px]" />
            <div className="ml-[6px]"><Sel w="w-[40px]">...</Sel></div>
            <div className="ml-[8px]"><VSep /></div>
            <div className="ml-[5px]"><TBtn><span className="font-['Liberation_Serif'] text-[18px] font-bold text-[#444]">B</span></TBtn></div>
            <div className="ml-[1px]"><TBtn><span className="font-['Liberation_Serif'] text-[18px] font-bold italic text-[#444]">I</span></TBtn></div>
            <TBtn><span className="font-['Liberation_Serif'] text-[17px] font-bold text-[#444] underline">U</span></TBtn>
            <div className="ml-[3px]"><VSep /></div>
            <div className="ml-[5px]"><TBtn active><AlignIco mode="left" /></TBtn></div>
            <TBtn><AlignIco mode="center" /></TBtn>
            <TBtn><AlignIco mode="right" /></TBtn>
            <div className="ml-[3px]"><VSep /></div>
            <div className="ml-[6px] -mt-[12px] flex w-[31px] justify-center"><VAlignIco /></div>
            <TBtn active><div className="flex h-[22px] w-[22px] items-center justify-center bg-white"><VAlignIco /></div></TBtn>
            <div className="mt-[12px] flex w-[33px] justify-center"><VAlignIco /></div>
            <svg width="13" height="13" viewBox="0 0 13 13" className="ml-[26px]"><circle cx="6.500" cy="6.500" r="6" fill="none" stroke="#bbb" /><path d="M4 4l5 5M9.500 5.500v4h-4" fill="none" stroke="#bbb" /></svg>
        </div>
        <div className="flex h-[47px] items-center pl-[8px] pt-[3px] text-[15px] text-[#444]">
            <span className="w-[56px] whitespace-nowrap">Bordure</span>
            <Caret className="ml-[2px]" />
            <svg width="20" height="20" viewBox="0 0 20 20" className="ml-[16px]"><path d="M5 15L15 3l2 2L7 17z" fill="#e8c458" /><path d="M15 3l2 2" stroke="#d8504a" strokeWidth="2.500" /><path d="M1 19h14" stroke="#bbb" strokeWidth="2" /></svg>
            <Caret className="ml-[3px]" />
            <span className="ml-[6px]">Style</span>
            <div className="ml-[4px]"><Sel w="w-[100px]">Aucun</Sel></div>
            <svg width="20" height="20" viewBox="0 0 20 20" className="ml-[11px]"><path d="M2 13l6-6 5 5-5 6c-3 1-5-2-6-5z" fill="#e2c060" /><path d="M10 7l6-6 3 3-6 6z" fill="#8a7a5a" /></svg>
            <div className="ml-[98px] flex h-[36px] w-[39px] items-center justify-center border border-[#c8c8c8] bg-white">
                <svg width="16" height="16" viewBox="0 0 16 16"><path d="M2 1h7v3H2zM5 5h10v9H5zM7 8h6M7 10h6" fill="none" stroke="#555" /><path d="M0 11h7M3.500 8v7" stroke="#22c522" strokeWidth="2" /></svg>
            </div>
        </div>
    </>
)

const RCOLS = [
    ["w-[200px]", "Axe d'analyse"], ["w-[78px]", "Agrégat..."], ["w-[69px]", "Opéra..."],
    ["w-[57px]", "Calcul"], ["w-[81px]", "Rupture ..."], ["w-[79px]", "Mode d..."], ["w-[83px]", "Position ..."],
]
const RROWS = ["N° de pièce", "Type de document", "Qté Vendues"]

const ModeIco = () => (
    <svg width="14" height="16" viewBox="0 0 14 16" className="ml-[3px]">
        <ellipse cx="7" cy="8" rx="6.500" ry="7.500" fill="#e8e8e8" stroke="#222" />
        <path d="M1.500 3.500h11M1 6h12M1 10h12M1 12.500h12" stroke="#444" strokeWidth=".8" />
        <path d="M3.500 10.500L7 4.500l3.500 6z" fill="#111" />
    </svg>
)

const RestituerTable = () => (
    <div className="text-[14.500px] font-light text-[#333]">
        <div className="flex h-[30px] border-y border-[#bdbdbd] bg-[#f5f5f5] font-semibold text-[#444] whitespace-nowrap">
            <div className="w-[33px] shrink-0 border-r border-[#bdbdbd]" />
            {RCOLS.map(([w, h], i) => (
                <div key={h} className={`${w} flex shrink-0 items-center overflow-hidden ${i < 6 ? "border-r border-[#bdbdbd]" : ""} pl-[4px] tracking-[-0.2px]`}>{h}</div>
            ))}
        </div>
        {RROWS.map((row, r) => (
            <div key={row} className="flex h-[22px] whitespace-nowrap">
                <div className="w-[33px] shrink-0 border-r border-[#bdbdbd]" />
                {RCOLS.map(([w], c) => (
                    <div key={c} className={`${w} flex shrink-0 items-center border-r border-[#bdbdbd] ${c === 4 ? "justify-center" : c === 0 ? "pl-[4px]" : ""}`}>
                        {c === 0 && row}
                        {c === 1 && r === 2 && <><span className="ml-[3px] mr-[6px] w-[16px] text-center font-['Liberation_Serif'] text-[19px] font-bold text-[#111]">Σ</span>Somme</>}
                        {c === 4 && <div className="h-[13px] w-[13px] border border-[#aaa] bg-white" />}
                        {c === 5 && <ModeIco />}
                    </div>
                ))}
            </div>
        ))}
    </div>
)

const Dialog = () => (
    <div className="absolute left-[437px] top-[252px] z-20 flex h-[764px] w-[1050px] flex-col border-x border-[#9a9a9a] bg-white font-['Open_Sans']">
        <div className="flex h-[51px] shrink-0 items-center bg-black">
            <span className="ml-[27px] text-[20px] font-semibold text-[#22c55e]">S</span>
            <span className="ml-[35px] text-[22px] font-light text-[#c8d0d8] tracking-[0.1px]">ASSISTANT LISTE</span>
            <div className="ml-auto mt-[2px] h-[2px] w-[6px] self-center bg-white" />
            <div className="ml-[19px] h-[8px] w-[8px] border border-t-2 border-white" />
            <X size={11} strokeWidth={2} className="ml-[18px] mr-[27px] text-white" />
        </div>
        <div className="flex pl-[23px] pt-[9px]">
            <SourcesPanel />
            <div className="relative ml-[15px] w-[691px] shrink-0">
                <FiltresPanel />
                <div className="flex h-[15px] items-center justify-center">
                    <div className="w-[16px] border-t border-dotted border-[#888]" />
                </div>
                <div className="flex h-[30px] items-start">
                    <div className="flex h-[30px] w-[100px] items-center justify-center bg-[#d0d0d0] text-[14.500px] text-[#222]">RESTITUER</div>
                    <div className="ml-[5px] flex gap-[4px]">
                        <TabBtn w="w-[140px]">Axe Calculé</TabBtn>
                        <TabBtn w="w-[170px]">Montant Conditionnel</TabBtn>
                        <TabBtn w="w-[82px]">Options</TabBtn>
                    </div>
                </div>
                <div className="h-[428px] border-[5px] border-[#d0d0d0] bg-white">
                    <div className="border-x border-[#bdbdbd]">
                        <div className="pt-[5px]"><Toolbar /></div>
                        <RestituerTable />
                    </div>
                </div>
                <div className="absolute -left-[8px] top-[370px] h-[14px] border-l border-dotted border-[#888]" />
            </div>
        </div>
        <div className="mt-[5px] flex justify-end gap-[6px] pr-[23px]">
            <div className="flex h-[26px] w-[85px] items-center justify-center border border-[#8a9aa6] bg-[#2a4a5e] pt-[2px] text-[12px] text-white">Valider</div>
            <div className="flex h-[26px] w-[85px] items-center justify-center border border-b-0 border-black bg-white pt-[3px] text-[15px] text-black">Annuler</div>
        </div>
    </div>
)

export default function App() {
    return (
        <div className="relative flex h-[1016px] w-[1919px] flex-col overflow-hidden bg-[#e6e6e6] font-['Open_Sans']">
            <TitleBar />
            <Ribbon />
            <FormulaBar />
            <Sheet />
            <BottomBars />
            <Dialog />
        </div>
    )
}
